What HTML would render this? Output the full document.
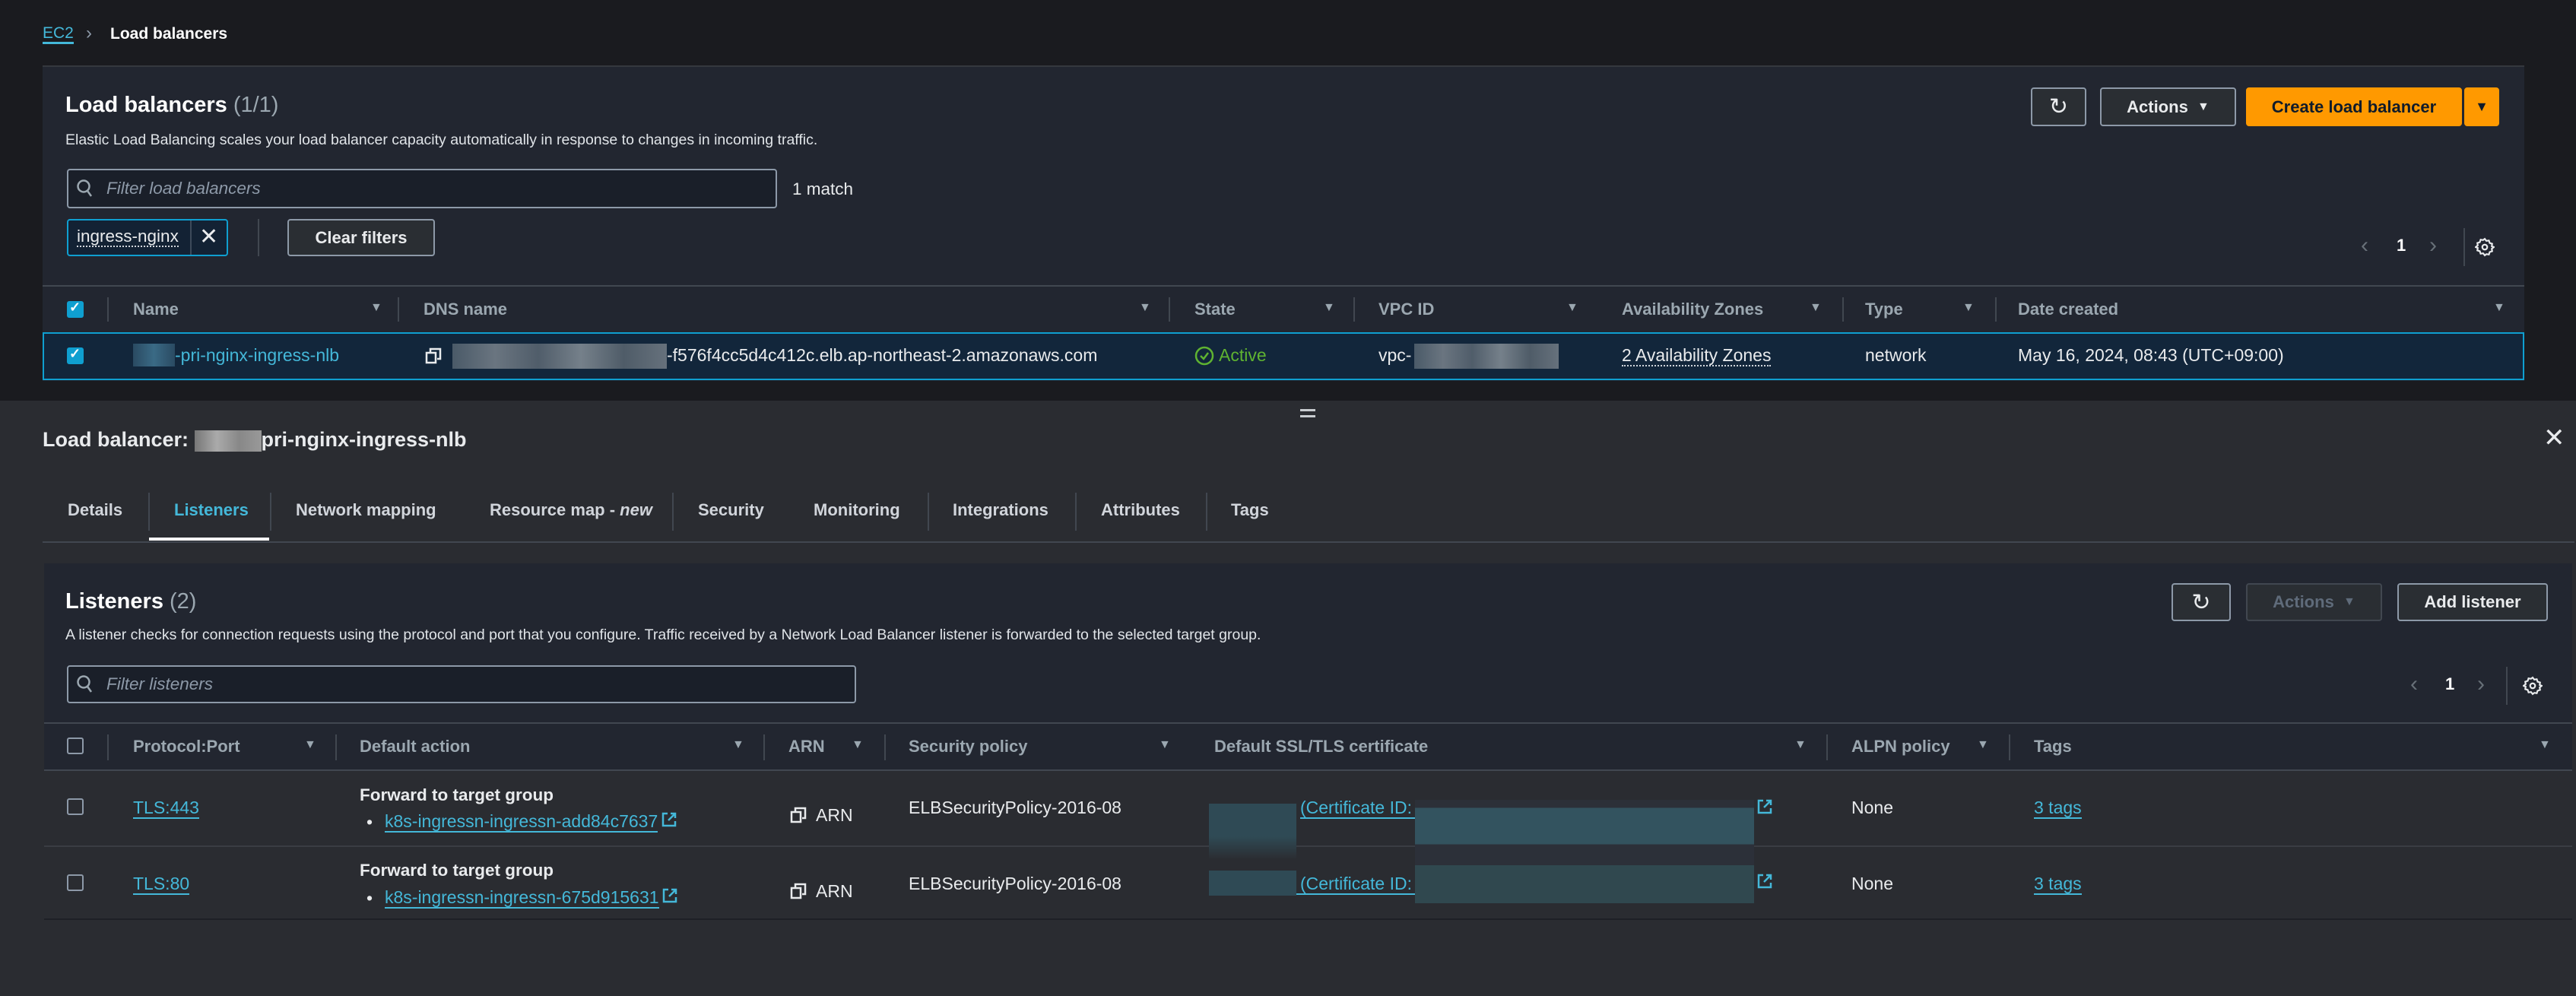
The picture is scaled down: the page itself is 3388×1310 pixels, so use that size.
<!DOCTYPE html>
<html><head><meta charset="utf-8"><style>
*{box-sizing:border-box;margin:0;padding:0}
body{width:3388px;height:1310px;background:#1a1b1f;font-family:"Liberation Sans",sans-serif;color:#d1d5db;position:relative;overflow:hidden;font-size:23px}
.a{position:absolute;white-space:nowrap}
.b{font-weight:bold}
.link{color:#44b8d9}
.hd{color:#9ba7b0;font-weight:bold;font-size:22px}
.ul{border-bottom:2px solid #44b8d9}
.dot{border-bottom:2px dotted #d1d5db}
.btn{position:absolute;border:2px solid #8d99a8;border-radius:4px;background:#2a2e33;color:#e9ebed;font-weight:bold;font-size:22px;display:flex;align-items:center;justify-content:center}
.sep{position:absolute;width:2px;background:#414750}
.cb{position:absolute;width:22px;height:22px;border:2px solid #8d99a8;border-radius:3px}
.cbk{position:absolute;width:22px;height:22px;background:#0f9fd0;border-radius:3px}
.blur{position:absolute;background:linear-gradient(90deg,#4a5a68,#6a7580 20%,#505d6a 40%,#75808a 60%,#4f5c68 80%,#66717c)}
.tri{font-size:16px;color:#9ba7b0}
</style></head><body>
<!-- breadcrumb -->
<div class="a link" style="left:56px;top:33px;font-size:21px;color:#44b8d9;border-bottom:3px solid #44b8d9;line-height:22px">EC2</div>
<div class="a" style="left:113px;top:30px;font-size:24px;color:#8d99a8">›</div>
<div class="a b" style="left:145px;top:33px;font-size:21px;color:#fff">Load balancers</div>

<!-- top panel -->
<div class="a" style="left:56px;top:86px;width:3264px;height:415px;background:#222630;border-top:2px solid #35383e"></div>
<div class="a" style="left:86px;top:122px;font-size:29px;font-weight:bold;color:#fff">Load balancers <span style="font-weight:normal;color:#9ba7b0">(1/1)</span></div>
<div class="a" style="left:86px;top:173px;font-size:19.5px;color:#e0e4e8">Elastic Load Balancing scales your load balancer capacity automatically in response to changes in incoming traffic.</div>
<div class="a" style="left:88px;top:222px;width:934px;height:52px;border:2px solid #8d99a8;border-radius:4px;background:#1a1f29"></div>
<svg class="a" style="left:100px;top:235px" width="24" height="28" viewBox="0 0 24 28"><circle cx="10" cy="10" r="7.5" fill="none" stroke="#9ba7b0" stroke-width="2.5"/><path d="M15 16l5 7" stroke="#9ba7b0" stroke-width="2.5"/></svg>
<div class="a" style="left:140px;top:235px;font-style:italic;color:#8d99a8;font-size:22.5px">Filter load balancers</div>
<div class="a" style="left:1042px;top:236px;font-size:22.5px;color:#e9ebed">1 match</div>
<div class="a" style="left:88px;top:288px;width:212px;height:49px;border:2px solid #0f9fd0;border-radius:4px;background:#132234"></div>
<div class="a" style="left:250px;top:290px;width:2px;height:45px;background:#3d4a5a"></div>
<div class="a dot" style="left:101px;top:299px;font-size:22.5px;color:#e9ebed;line-height:24px">ingress-nginx</div>
<div class="a" style="left:262px;top:294px;font-size:30px;color:#e9ebed">✕</div>
<div class="a" style="left:339px;top:288px;width:2px;height:49px;background:#414750"></div>
<div class="btn" style="left:378px;top:288px;width:194px;height:49px">Clear filters</div>

<div class="btn" style="left:2671px;top:115px;width:73px;height:51px;font-size:30px;font-weight:normal">↻</div>
<div class="btn" style="left:2762px;top:115px;width:179px;height:51px">Actions&nbsp;&nbsp;<span class="tri" style="color:#e9ebed">▼</span></div>
<div class="btn" style="left:2954px;top:115px;width:284px;height:51px;background:#ff9900;border-color:#ff9900;color:#0f1b2a">Create load balancer</div>
<div class="btn" style="left:3241px;top:115px;width:46px;height:51px;background:#ff9900;border-color:#ff9900;color:#0f1b2a;font-size:18px">▼</div>

<div class="a" style="left:3105px;top:306px;font-size:30px;color:#687078">‹</div>
<div class="a b" style="left:3152px;top:310px;font-size:22px;color:#fff">1</div>
<div class="a" style="left:3195px;top:306px;font-size:30px;color:#687078">›</div>
<div class="sep" style="left:3240px;top:300px;height:50px"></div>
<svg class="a" style="left:3255px;top:312px" width="26" height="26" viewBox="0 0 24 24"><path d="M12 2l2 2.5 3-.5 1 3 3 1-.5 3L23 12l-2.5 2 .5 3-3 1-1 3-3-.5L12 22l-2-2.5-3 .5-1-3-3-1 .5-3L1 12l2.5-2L3 7l3-1 1-3 3 .5z" fill="none" stroke="#e9ebed" stroke-width="2"/><circle cx="12" cy="12" r="3" fill="none" stroke="#e9ebed" stroke-width="2"/></svg>

<div class="a" style="left:56px;top:375px;width:3264px;height:2px;background:#414750"></div>
<div class="cbk" style="left:88px;top:396px"></div><div class="a" style="left:91px;top:394px;color:#fff;font-size:18px;font-weight:bold">✓</div>
<div class="sep" style="left:141px;top:391px;height:32px"></div>
<div class="a hd" style="left:175px;top:394px">Name</div><div class="a tri" style="left:487px;top:396px">▼</div>
<div class="sep" style="left:523px;top:391px;height:32px"></div>
<div class="a hd" style="left:557px;top:394px">DNS name</div><div class="a tri" style="left:1498px;top:396px">▼</div>
<div class="sep" style="left:1537px;top:391px;height:32px"></div>
<div class="a hd" style="left:1571px;top:394px">State</div><div class="a tri" style="left:1740px;top:396px">▼</div>
<div class="sep" style="left:1780px;top:391px;height:32px"></div>
<div class="a hd" style="left:1813px;top:394px">VPC ID</div><div class="a tri" style="left:2060px;top:396px">▼</div>
<div class="a hd" style="left:2133px;top:394px">Availability Zones</div><div class="a tri" style="left:2380px;top:396px">▼</div>
<div class="sep" style="left:2423px;top:391px;height:32px"></div>
<div class="a hd" style="left:2453px;top:394px">Type</div><div class="a tri" style="left:2581px;top:396px">▼</div>
<div class="sep" style="left:2624px;top:391px;height:32px"></div>
<div class="a hd" style="left:2654px;top:394px">Date created</div><div class="a tri" style="left:3279px;top:396px">▼</div>

<div class="a" style="left:56px;top:437px;width:3264px;height:63px;background:#12263b;border:2px solid #0f9fd0"></div>
<div class="cbk" style="left:88px;top:457px"></div><div class="a" style="left:91px;top:455px;color:#fff;font-size:18px;font-weight:bold">✓</div>
<div class="blur" style="left:175px;top:452px;width:55px;height:30px;background:linear-gradient(90deg,#2a4a62,#3a6a85,#2a4a62)"></div>
<div class="a link" style="left:230px;top:454px">-pri-nginx-ingress-nlb</div>
<svg class="a" style="left:559px;top:457px" width="22" height="22" viewBox="0 0 22 22"><rect x="2" y="7" width="12" height="13" fill="none" stroke="#e9ebed" stroke-width="2.5"/><path d="M7 6V2h13v13h-4" fill="none" stroke="#e9ebed" stroke-width="2.5"/></svg>
<div class="blur" style="left:595px;top:452px;width:282px;height:33px"></div>
<div class="a" style="left:877px;top:454px;color:#e9ebed">-f576f4cc5d4c412c.elb.ap-northeast-2.amazonaws.com</div>
<svg class="a" style="left:1571px;top:455px" width="26" height="26" viewBox="0 0 26 26"><circle cx="13" cy="13" r="11" fill="none" stroke="#5fb331" stroke-width="2.5"/><path d="M8 13l4 4 6-8" fill="none" stroke="#5fb331" stroke-width="2.5"/></svg>
<div class="a" style="left:1603px;top:454px;color:#5fb331">Active</div>
<div class="a" style="left:1813px;top:454px;color:#e9ebed">vpc-</div>
<div class="blur" style="left:1860px;top:452px;width:190px;height:33px"></div>
<div class="a dot" style="left:2133px;top:454px;color:#e9ebed;line-height:26px">2 Availability Zones</div>
<div class="a" style="left:2453px;top:454px;color:#e9ebed">network</div>
<div class="a" style="left:2654px;top:454px;color:#e9ebed">May 16, 2024, 08:43 (UTC+09:00)</div>

<!-- lower split panel -->
<div class="a" style="left:0;top:527px;width:3388px;height:783px;background:#2a2c31"></div>
<div class="a" style="left:1710px;top:538px;width:20px;height:3px;background:#c8ccd0"></div>
<div class="a" style="left:1710px;top:546px;width:20px;height:3px;background:#c8ccd0"></div>
<div class="a b" style="left:56px;top:563px;font-size:27px;color:#e9ebed">Load balancer: <span style="display:inline-block;width:88px;height:28px;vertical-align:middle;background:linear-gradient(90deg,#777,#aaa,#888,#999)"></span>pri-nginx-ingress-nlb</div>
<div class="a" style="left:3345px;top:556px;font-size:34px;color:#e9ebed">✕</div>

<div class="a b" style="left:89px;top:658px;font-size:22px;color:#d1d5db">Details</div>
<div class="sep" style="left:195px;top:648px;height:50px"></div>
<div class="a b" style="left:229px;top:658px;font-size:22px;color:#44b8d9">Listeners</div>
<div class="a" style="left:196px;top:707px;width:158px;height:4px;background:#fff"></div>
<div class="sep" style="left:355px;top:648px;height:50px"></div>
<div class="a b" style="left:389px;top:658px;font-size:22px">Network mapping</div>
<div class="a b" style="left:644px;top:658px;font-size:22px">Resource map - <i>new</i></div>
<div class="sep" style="left:884px;top:648px;height:50px"></div>
<div class="a b" style="left:918px;top:658px;font-size:22px">Security</div>
<div class="a b" style="left:1070px;top:658px;font-size:22px">Monitoring</div>
<div class="sep" style="left:1220px;top:648px;height:50px"></div>
<div class="a b" style="left:1253px;top:658px;font-size:22px">Integrations</div>
<div class="sep" style="left:1414px;top:648px;height:50px"></div>
<div class="a b" style="left:1448px;top:658px;font-size:22px">Attributes</div>
<div class="sep" style="left:1586px;top:648px;height:50px"></div>
<div class="a b" style="left:1619px;top:658px;font-size:22px">Tags</div>
<div class="a" style="left:56px;top:712px;width:3330px;height:2px;background:#414750"></div>

<!-- listeners panel -->
<div class="a" style="left:58px;top:741px;width:3325px;height:272px;background:#222630"></div>
<div class="a" style="left:58px;top:1013px;width:3325px;height:197px;background:#2a2c31;border-bottom:2px solid #1e2026"></div>
<div class="a" style="left:86px;top:775px;font-size:29px;font-weight:bold;color:#fff">Listeners <span style="font-weight:normal;color:#9ba7b0">(2)</span></div>
<div class="a" style="left:86px;top:824px;font-size:19.5px;color:#e0e4e8">A listener checks for connection requests using the protocol and port that you configure. Traffic received by a Network Load Balancer listener is forwarded to the selected target group.</div>
<div class="a" style="left:88px;top:875px;width:1038px;height:50px;border:2px solid #8d99a8;border-radius:4px;background:#1a1f29"></div>
<svg class="a" style="left:100px;top:887px" width="24" height="28" viewBox="0 0 24 28"><circle cx="10" cy="10" r="7.5" fill="none" stroke="#9ba7b0" stroke-width="2.5"/><path d="M15 16l5 7" stroke="#9ba7b0" stroke-width="2.5"/></svg>
<div class="a" style="left:140px;top:887px;font-style:italic;color:#8d99a8;font-size:22.5px">Filter listeners</div>

<div class="btn" style="left:2856px;top:767px;width:78px;height:50px;font-size:30px;font-weight:normal">↻</div>
<div class="btn" style="left:2954px;top:767px;width:179px;height:50px;border-color:#414750;color:#5f6b7a">Actions&nbsp;&nbsp;<span class="tri" style="color:#5f6b7a">▼</span></div>
<div class="btn" style="left:3153px;top:767px;width:198px;height:50px">Add listener</div>

<div class="a" style="left:3170px;top:883px;font-size:30px;color:#687078">‹</div>
<div class="a b" style="left:3216px;top:887px;font-size:22px;color:#fff">1</div>
<div class="a" style="left:3258px;top:883px;font-size:30px;color:#687078">›</div>
<div class="sep" style="left:3296px;top:877px;height:50px"></div>
<svg class="a" style="left:3318px;top:889px" width="26" height="26" viewBox="0 0 24 24"><path d="M12 2l2 2.5 3-.5 1 3 3 1-.5 3L23 12l-2.5 2 .5 3-3 1-1 3-3-.5L12 22l-2-2.5-3 .5-1-3-3-1 .5-3L1 12l2.5-2L3 7l3-1 1-3 3 .5z" fill="none" stroke="#e9ebed" stroke-width="2"/><circle cx="12" cy="12" r="3" fill="none" stroke="#e9ebed" stroke-width="2"/></svg>

<div class="a" style="left:58px;top:950px;width:3325px;height:2px;background:#414750"></div>
<div class="cb" style="left:88px;top:970px"></div>
<div class="sep" style="left:141px;top:966px;height:34px"></div>
<div class="a hd" style="left:175px;top:969px">Protocol:Port</div><div class="a tri" style="left:400px;top:971px">▼</div>
<div class="sep" style="left:441px;top:966px;height:34px"></div>
<div class="a hd" style="left:473px;top:969px">Default action</div><div class="a tri" style="left:963px;top:971px">▼</div>
<div class="sep" style="left:1004px;top:966px;height:34px"></div>
<div class="a hd" style="left:1037px;top:969px">ARN</div><div class="a tri" style="left:1120px;top:971px">▼</div>
<div class="sep" style="left:1163px;top:966px;height:34px"></div>
<div class="a hd" style="left:1195px;top:969px">Security policy</div><div class="a tri" style="left:1524px;top:971px">▼</div>
<div class="a hd" style="left:1597px;top:969px">Default SSL/TLS certificate</div><div class="a tri" style="left:2360px;top:971px">▼</div>
<div class="sep" style="left:2402px;top:966px;height:34px"></div>
<div class="a hd" style="left:2435px;top:969px">ALPN policy</div><div class="a tri" style="left:2600px;top:971px">▼</div>
<div class="sep" style="left:2642px;top:966px;height:34px"></div>
<div class="a hd" style="left:2675px;top:969px">Tags</div><div class="a tri" style="left:3339px;top:971px">▼</div>
<div class="a" style="left:58px;top:1012px;width:3325px;height:2px;background:#414750"></div>
<div class="a" style="left:58px;top:1112px;width:3325px;height:2px;background:#3a3d43"></div>

<!-- row 1 -->
<div class="cb" style="left:88px;top:1050px"></div>
<div class="a link ul" style="left:175px;top:1049px;line-height:26px">TLS:443</div>
<div class="a b" style="left:473px;top:1033px;color:#e9ebed;font-size:22.5px">Forward to target group</div>
<div class="a" style="left:482px;top:1068px;color:#e9ebed">•</div>
<div class="a link ul" style="left:506px;top:1067px;line-height:26px">k8s-ingressn-ingressn-add84c7637</div>
<svg class="a" style="left:869px;top:1067px" width="22" height="22" viewBox="0 0 22 22"><path d="M9 3H3v16h16v-6M13 3h6v6M19 3l-9 9" fill="none" stroke="#44b8d9" stroke-width="2.5"/></svg>
<svg class="a" style="left:1039px;top:1061px" width="22" height="22" viewBox="0 0 22 22"><rect x="2" y="7" width="12" height="13" fill="none" stroke="#e9ebed" stroke-width="2.5"/><path d="M7 6V2h13v13h-4" fill="none" stroke="#e9ebed" stroke-width="2.5"/></svg>
<div class="a" style="left:1073px;top:1059px;color:#e9ebed">ARN</div>
<div class="a" style="left:1195px;top:1049px;color:#e9ebed">ELBSecurityPolicy-2016-08</div>
<div class="blur" style="left:1590px;top:1057px;width:115px;height:72px;background:linear-gradient(#2f4a55 60%,#2b2e33)"></div>
<div class="a link ul" style="left:1710px;top:1049px;line-height:26px;width:151px">(Certificate ID:</div>
<div class="blur" style="left:1861px;top:1052px;width:446px;height:106px;background:linear-gradient(#2c3038 10%,#33535f 10%,#33535f 55%,#2c3039 55%)"></div>
<svg class="a" style="left:2310px;top:1050px" width="22" height="22" viewBox="0 0 22 22"><path d="M9 3H3v16h16v-6M13 3h6v6M19 3l-9 9" fill="none" stroke="#44b8d9" stroke-width="2.5"/></svg>
<div class="a" style="left:2435px;top:1049px;color:#e9ebed">None</div>
<div class="a link ul" style="left:2675px;top:1049px;line-height:26px">3 tags</div>

<!-- row 2 -->
<div class="cb" style="left:88px;top:1150px"></div>
<div class="a link ul" style="left:175px;top:1149px;line-height:26px">TLS:80</div>
<div class="a b" style="left:473px;top:1132px;color:#e9ebed;font-size:22.5px">Forward to target group</div>
<div class="a" style="left:482px;top:1168px;color:#e9ebed">•</div>
<div class="a link ul" style="left:506px;top:1167px;line-height:26px">k8s-ingressn-ingressn-675d915631</div>
<svg class="a" style="left:870px;top:1167px" width="22" height="22" viewBox="0 0 22 22"><path d="M9 3H3v16h16v-6M13 3h6v6M19 3l-9 9" fill="none" stroke="#44b8d9" stroke-width="2.5"/></svg>
<svg class="a" style="left:1039px;top:1161px" width="22" height="22" viewBox="0 0 22 22"><rect x="2" y="7" width="12" height="13" fill="none" stroke="#e9ebed" stroke-width="2.5"/><path d="M7 6V2h13v13h-4" fill="none" stroke="#e9ebed" stroke-width="2.5"/></svg>
<div class="a" style="left:1073px;top:1159px;color:#e9ebed">ARN</div>
<div class="a" style="left:1195px;top:1149px;color:#e9ebed">ELBSecurityPolicy-2016-08</div>
<div class="a link ul" style="left:1597px;top:1149px;line-height:26px;width:264px;padding-left:113px">(Certificate ID:</div>
<div class="blur" style="left:1590px;top:1145px;width:115px;height:33px;background:#2f4a55"></div>
<div class="blur" style="left:1861px;top:1138px;width:446px;height:50px;background:#30484f"></div>
<svg class="a" style="left:2310px;top:1148px" width="22" height="22" viewBox="0 0 22 22"><path d="M9 3H3v16h16v-6M13 3h6v6M19 3l-9 9" fill="none" stroke="#44b8d9" stroke-width="2.5"/></svg>
<div class="a" style="left:2435px;top:1149px;color:#e9ebed">None</div>
<div class="a link ul" style="left:2675px;top:1149px;line-height:26px">3 tags</div>
</body></html>
